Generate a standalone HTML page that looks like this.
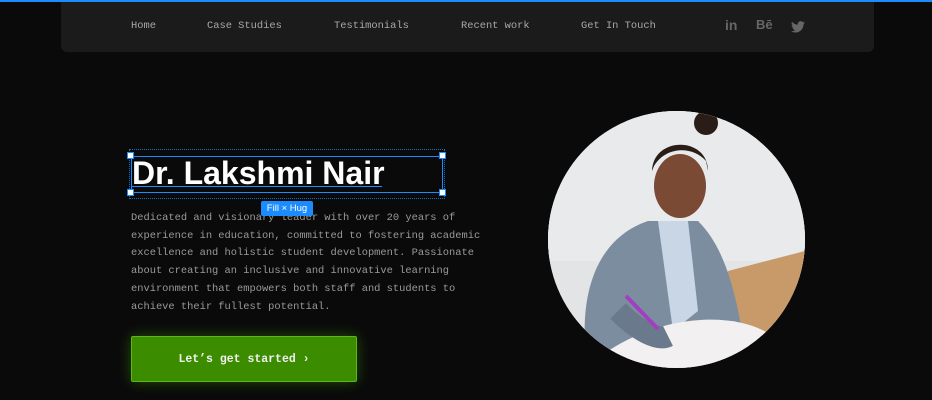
<!DOCTYPE html>
<html><head><style>
*{margin:0;padding:0;box-sizing:border-box}
body{width:932px;height:400px;background:#0a0a0a;position:relative;overflow:hidden;font-family:"Liberation Mono",monospace}
.top{position:absolute;left:0;top:0;width:932px;height:2px;background:#1a8cff}
.nav{position:absolute;left:61px;top:2px;width:813px;height:50px;background:#1b1b1b;border-radius:0 0 6px 6px}
.nav span{position:absolute;top:18px;font-size:10.4px;color:#a8a8a8}
h1{position:absolute;left:132px;top:154px;font-family:"Liberation Sans",sans-serif;font-weight:bold;font-size:32px;color:#fff;letter-spacing:0;line-height:38px}
.sel{position:absolute;left:131px;top:156px;width:312px;height:37px;border:1px solid #1a8cff}
.sel2{position:absolute;left:129px;top:149px;width:316px;height:50px;border:1px dotted #1a6cc0}
.h{position:absolute;width:7px;height:7px;background:#fff;border:1px solid #1a8cff}
.ul{position:absolute;left:132px;top:186px;width:250px;height:1px;background:#1a8cff}
.tag{position:absolute;left:261px;top:201px;width:52px;height:15px;background:#1a8cff;color:#fff;font-family:"Liberation Sans",sans-serif;font-size:9.5px;text-align:center;line-height:15px;border-radius:2px}
p{position:absolute;left:131px;top:210px;width:360px;font-size:10.4px;line-height:17.7px;color:#9a9a9a}
.btn{position:absolute;left:131px;top:336px;width:226px;height:46px;background:#3c8c00;border:1px solid #5aba1a;border-radius:2px;color:#f0f0f0;font-weight:bold;font-size:11.5px;text-align:center;line-height:46px;box-shadow:0 0 14px rgba(70,160,0,.45)}
.photo{position:absolute;left:548px;top:111px;width:257px;height:257px;border-radius:50%;overflow:hidden;background:#e4e6e8}
</style></head><body>
<div class="top"></div>
<div class="nav">
<span style="left:70px">Home</span>
<span style="left:146px">Case Studies</span>
<span style="left:273px">Testimonials</span>
<span style="left:400px">Recent work</span>
<span style="left:520px">Get In Touch</span>
<span style="left:664px;top:15px;font-family:'Liberation Sans';font-weight:bold;font-size:14px;color:#666">in</span>
<span style="left:695px;top:15px;font-family:'Liberation Sans';font-weight:bold;font-size:13px;color:#666">Bē</span>
<svg style="position:absolute;left:730px;top:19px" width="14" height="12" viewBox="0 0 24 20"><path fill="#666" d="M24 2.4a10 10 0 0 1-2.8.8A5 5 0 0 0 23.3.4a10 10 0 0 1-3.1 1.2A4.9 4.9 0 0 0 11.8 6 14 14 0 0 1 1.7.9a4.9 4.9 0 0 0 1.5 6.6 5 5 0 0 1-2.2-.6 4.9 4.9 0 0 0 3.9 4.8 5 5 0 0 1-2.2.1 4.9 4.9 0 0 0 4.6 3.4A9.900 9.900 0 0 1 0 17.3 14 14 0 0 0 7.5 19.5c9 0 14-7.5 14-14v-.6A10 10 0 0 0 24 2.4z"/></svg>
</div>
<div class="sel2"></div>
<h1>Dr. Lakshmi Nair</h1>
<div class="ul"></div>
<div class="sel"></div>
<div class="h" style="left:127px;top:152px"></div>
<div class="h" style="left:439px;top:152px"></div>
<div class="h" style="left:127px;top:189px"></div>
<div class="h" style="left:439px;top:189px"></div>
<p>Dedicated and visionary leader with over 20 years of experience in education, committed to fostering academic excellence and holistic student development. Passionate about creating an inclusive and innovative learning environment that empowers both staff and students to achieve their fullest potential.</p>
<div class="tag">Fill × Hug</div>
<div class="btn">Let’s get started ›</div>
<div class="photo">
<svg width="257" height="257" viewBox="0 0 257 257">
<rect width="257" height="257" fill="#e2e4e6"/>
<rect x="0" y="0" width="257" height="150" fill="#e8eaec"/>
<path d="M180 160 L257 140 L257 257 L150 257 Z" fill="#c89a6a"/>
<path d="M40 257 C30 200 40 130 100 110 L150 110 C180 140 190 190 200 257 Z" fill="#7d8da0"/>
<path d="M110 110 L140 110 L150 200 L125 220 Z" fill="#c8d6e6"/>
<ellipse cx="132" cy="75" rx="26" ry="32" fill="#7a4a35"/>
<path d="M104 60 C105 25 160 25 160 60 L158 50 C145 35 118 35 106 55 Z" fill="#2a1c16"/>
<circle cx="158" cy="12" r="12" fill="#2a1c16"/>
<path d="M60 240 C120 200 200 200 230 230 L230 257 L60 257 Z" fill="#f2f0f0"/>
<path d="M70 200 C90 220 110 230 120 225" stroke="#6a7a8c" stroke-width="22" fill="none"/>
<path d="M78 185 L110 218" stroke="#a040c0" stroke-width="4"/>
</svg>
</div>
</body></html>
